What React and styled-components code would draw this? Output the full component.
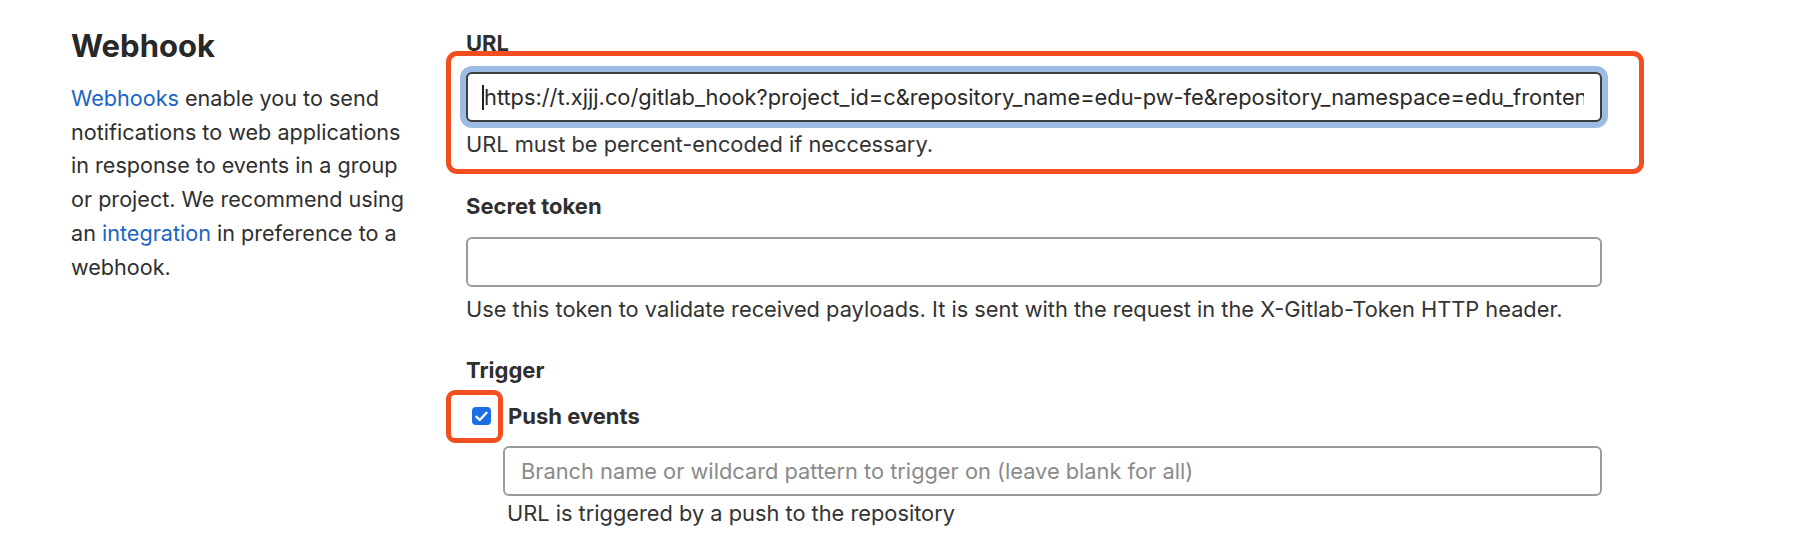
import styled, { createGlobalStyle } from "styled-components";

const GlobalStyle = createGlobalStyle`
  html, body {
    margin: 0;
    background: #ffffff;
  }
  body {
    font-family: Inter, "Noto Sans", "Liberation Sans", sans-serif;
    color: #2f2f2f;
  }
`;

const Page = styled.div`
  display: grid;
  grid-template-columns: 348px 1136px;
  column-gap: 47px;
  padding: 26px 0 0 71px;
`;

const Intro = styled.div``;

const Heading = styled.h4`
  margin: 0 0 16px;
  font-size: 31px;
  line-height: 40px;
  font-weight: 700;
  color: #282828;
`;

const IntroText = styled.p`
  margin: 0;
  font-size: 21.6px;
  line-height: 33.7px;
`;

const Link = styled.a`
  color: #1a64c4;
  text-decoration: none;
`;

const Form = styled.div`
  display: flex;
  flex-direction: column;
  padding-top: 5px;
`;

const Label = styled.label`
  display: block;
  font-size: 22px;
  line-height: 24px;
  font-weight: 700;
  margin-top: ${(p) => p.$top || 0}px;
`;

const Highlight = styled.div`
  margin: -4px -42px 0 -20px;
  padding: 16px 37px 9px 15px;
  border: 5px solid #f34e1f;
  border-radius: 11px;
`;

const Field = styled.div`
  position: relative;
  margin-top: ${(p) => p.$top || 0}px;
  margin-left: ${(p) => p.$indent || 0}px;
`;

const Input = styled.input`
  display: block;
  box-sizing: border-box;
  width: 100%;
  height: 50px;
  padding: 0 16px;
  font-family: inherit;
  font-size: 21.8px;
  color: #2a2a2a;
  background: #fff;
  border: ${(p) => (p.$focused ? "2px solid #3d3d3d" : "2px solid #9b9b9b")};
  border-radius: 6px;
  box-shadow: ${(p) => (p.$focused ? "0 0 0 6px #9dbce3" : "none")};
  outline: none;

  &::placeholder {
    color: #8a8a8a;
  }
`;

const Caret = styled.span`
  position: absolute;
  left: 16px;
  top: 13px;
  width: 2px;
  height: 25px;
  background: #1f1f1f;
`;

const Help = styled.p`
  margin: ${(p) => p.$top || 0}px 0 0 ${(p) => p.$indent || 0}px;
  font-size: 21.8px;
  line-height: 32px;
  color: #333;
`;

const CheckRow = styled.label`
  position: relative;
  display: flex;
  align-items: center;
  gap: 17px;
  margin: 22px 0 0 6px;
  font-size: 22px;
  line-height: 24px;
  font-weight: 700;
`;

const CheckBox = styled.span`
  display: inline-flex;
  align-items: center;
  justify-content: center;
  width: 19px;
  height: 18px;
  border-radius: 4px;
  background: #1a6fe6;
`;

const HiddenInput = styled.input`
  position: absolute;
  opacity: 0;
  width: 0;
  height: 0;
  margin: 0;
`;

const CheckMark = styled.span`
  position: absolute;
  left: -26px;
  top: -14px;
  width: 47px;
  height: 43px;
  border: 5px solid #f34e1f;
  border-radius: 9px;
  pointer-events: none;
`;

export default function App() {
  return (
    <>
      <GlobalStyle />
      <Page>
        <Intro>
          <Heading>Webhook</Heading>
          <IntroText>
            <Link href="#">Webhooks</Link> enable you to send notifications to
            web applications in response to events in a group or project. We
            recommend using an <Link href="#">integration</Link> in preference
            to a webhook.
          </IntroText>
        </Intro>

        <Form>
          <Label>URL</Label>
          <Highlight>
            <Field>
              <Input
                $focused
                readOnly
                value="https://t.xjjj.co/gitlab_hook?project_id=c&repository_name=edu-pw-fe&repository_namespace=edu_frontend"
              />
              <Caret />
            </Field>
            <Help $top={6}>URL must be percent-encoded if neccessary.</Help>
          </Highlight>

          <Label $top={20}>Secret token</Label>
          <Field $top={19}>
            <Input type="text" />
          </Field>
          <Help $top={6}>
            Use this token to validate received payloads. It is sent with the
            request in the X-Gitlab-Token HTTP header.
          </Help>

          <Label $top={33}>Trigger</Label>
          <CheckRow>
            <HiddenInput type="checkbox" defaultChecked />
            <CheckBox>
              <svg width="13" height="11" viewBox="0 0 13 11">
                <path
                  d="M1.5 5.8 L4.8 9 L11.5 1.8"
                  fill="none"
                  stroke="#fff"
                  strokeWidth="2.4"
                  strokeLinecap="round"
                  strokeLinejoin="round"
                />
              </svg>
            </CheckBox>
            Push events
            <CheckMark />
          </CheckRow>
          <Field $top={18} $indent={37}>
            <Input
              type="text"
              placeholder="Branch name or wildcard pattern to trigger on (leave blank for all)"
            />
          </Field>
          <Help $top={1} $indent={41}>
            URL is triggered by a push to the repository
          </Help>
        </Form>
      </Page>
    </>
  );
}
